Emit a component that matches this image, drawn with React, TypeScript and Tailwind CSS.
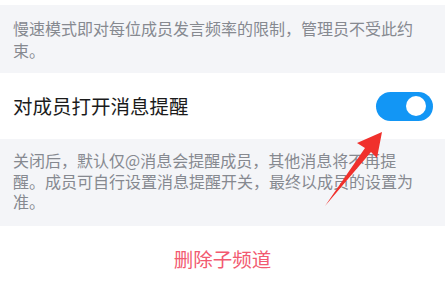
import React from "react";

export default function App() {
  const font = { fontFamily: '"Noto Sans CJK SC", "Noto Sans", sans-serif' };
  return (
    <div className="relative w-[445px] h-[287px] bg-white overflow-hidden" style={font}>
      <div className="h-[5px] bg-white" />
      <div className="bg-[#f4f5f8] pl-[13px] pr-[24px] pt-[12px] pb-[12px] text-[16px] leading-[22px] text-[#868990]">
        慢速模式即对每位成员发言频率的限制，管理员不受此约束。
      </div>
      <div className="h-[66px] bg-white flex items-center justify-between pl-[13px] pr-[12px]">
        <span className="text-[19.5px] text-[#1b1b1b]">对成员打开消息提醒</span>
        <div className="w-[57px] h-[29px] rounded-full bg-[#1296f5] flex items-center justify-end pr-[7px]">
          <div className="w-[20px] h-[20px] rounded-full bg-white" />
        </div>
      </div>
      <div className="bg-[#f4f5f8] pl-[13px] pr-[24px] pt-[11px] pb-[14px] text-[16px] leading-[20.5px] text-[#868990]">
        关闭后，默认仅@消息会提醒成员，其他消息将不再提醒。成员可自行设置消息提醒开关，最终以成员的设置为准。
      </div>
      <div className="flex justify-center pt-[18px]">
        <span className="text-[19.5px] text-[#f25a70]">删除子频道</span>
      </div>
      <svg className="absolute left-0 top-0" width="445" height="287" viewBox="0 0 445 287">
        <polygon points="382,132 357,143 365,148 325,206 371,152 377,158" fill="#f0302c" />
      </svg>
    </div>
  );
}
